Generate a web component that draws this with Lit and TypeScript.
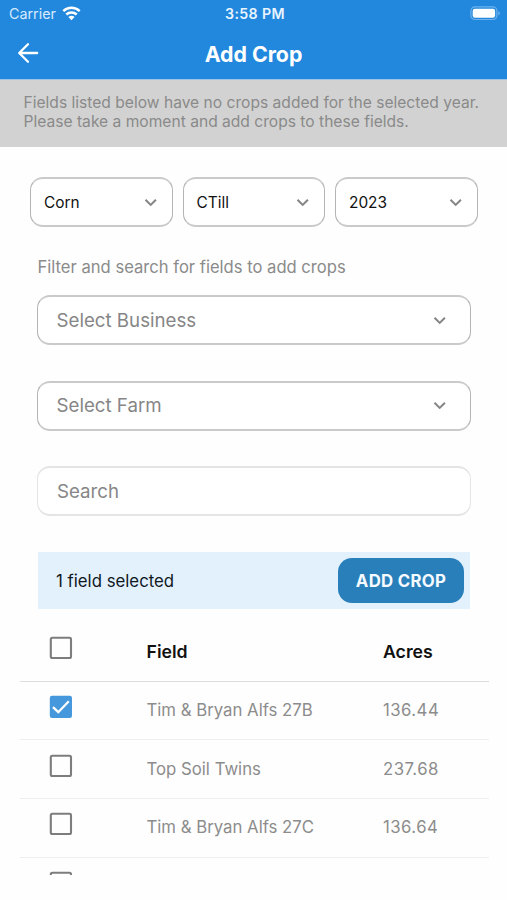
import { LitElement, html, css, svg } from "lit";
import { customElement, property } from "lit/decorators.js";

const chevron = html`<svg class="chev" width="14" height="9" viewBox="0 0 14 9" fill="none">
  ${svg`<path d="M1.5 1.7L6.7 6.9L11.9 1.7" stroke="currentColor" stroke-width="2"/>`}
</svg>`;

@customElement("select-box")
class SelectBox extends LitElement {
  @property() label = "";
  static styles = css`
    :host {
      display: flex;
      align-items: center;
      justify-content: space-between;
      box-sizing: border-box;
      height: 50px;
      border: 2px solid #cacaca;
      border-left-width: 1px;
      border-right-width: 1px;
      border-left-color: #b4b4b4;
      border-right-color: #b4b4b4;
      border-radius: 13px;
      background: #fff;
      color: #111;
      font-size: 15.4px;
      padding: 0 14px 0 13px;
    }
    :host([large]) {
      color: #868686;
      font-size: 18.7px;
      padding: 0 23px 0 18.5px;
    }
    .chev { color: #858585; display: block; }
  `;
  render() {
    return html`<span>${this.label}</span>${chevron}`;
  }
}

@customElement("check-box")
class CheckBox extends LitElement {
  @property({ type: Boolean }) checked = false;
  static styles = css`
    :host { display: block; width: 24px; height: 24px; }
    svg { display: block; }
  `;
  render() {
    return html`<svg width="24" height="24" viewBox="0 0 24 24" fill="none">
      ${this.checked
        ? svg`<rect x="0.8" y="0.8" width="22.2" height="22.2" rx="2.2" fill="#4698dc"/>
            <path d="M4 12.1L9.3 17.2L19.8 6.3" stroke="#fff" stroke-width="2.3"/>`
        : svg`<rect x="1.8" y="1.8" width="20.2" height="20.2" rx="1.5" stroke="#7d7d7d" stroke-width="2.1"/>`}
    </svg>`;
  }
}

interface Field {
  name: string;
  acres: string;
  checked: boolean;
}

@customElement("app-root")
class AppRoot extends LitElement {
  fields: Field[] = [
    { name: "Tim & Bryan Alfs 27B", acres: "136.44", checked: true },
    { name: "Top Soil Twins", acres: "237.68", checked: false },
    { name: "Tim & Bryan Alfs 27C", acres: "136.64", checked: false },
    { name: "", acres: "", checked: false },
  ];

  static styles = css`
    :host {
      display: flex;
      flex-direction: column;
      box-sizing: border-box;
      width: 507px;
      height: 900px;
      overflow: hidden;
      background: #fefefe;
      font-family: Inter, "Liberation Sans", sans-serif;
    }
    .head {
      height: 80px;
      box-sizing: border-box;
      border-bottom: 1px solid #9cc4e6;
      background: #2288dd;
      color: #fff;
      display: flex;
      flex-direction: column;
    }
    .status {
      height: 27px;
      display: grid;
      grid-template-columns: 1fr auto 1fr;
      align-items: center;
      padding: 0 6px 0 9px;
    }
    .carrier {
      display: flex;
      align-items: center;
      gap: 6px;
      font-size: 14.3px;
      color: #d6eaff;
    }
    .time { font-size: 14.2px; font-weight: 600; letter-spacing: 0.35px; color: #e8f4ff; }
    .battery { justify-self: end; }
    svg { display: block; }
    .bar {
      height: 52px;
      display: grid;
      grid-template-columns: 1fr auto 1fr;
      align-items: center;
      padding: 0 17px;
    }
    h1 { margin: 2px 0 0; font-size: 21.3px; font-weight: 700; line-height: 28px; }
    .notice {
      height: 67px;
      box-sizing: border-box;
      background: #d2d2d2;
      color: #8a8a8a;
      padding: 12.5px 23.5px 0;
      font-size: 15.6px;
      line-height: 19px;
    }
    .notice div { white-space: nowrap; }
    .trio {
      display: grid;
      grid-template-columns: repeat(3, 1fr);
      gap: 10px;
      padding: 30px 29.5px 0 30px;
    }
    .hint {
      margin: 30px 0 0 37.5px;
      height: 20px;
      line-height: 20px;
      font-size: 16.6px;
      color: #8b8b8b;
    }
    .filters {
      display: flex;
      flex-direction: column;
      gap: 35.5px;
      padding: 18px 36.5px 0 37px;
    }
    .search {
      box-sizing: border-box;
      height: 50px;
      border: 2px solid #e4e4e4;
      border-left-width: 1px;
      border-right-width: 1px;
      border-radius: 13px;
      background: #fff;
      color: #868686;
      font-size: 18.7px;
      padding-left: 19px;
      display: flex;
      align-items: center;
    }
    .banner {
      margin: 36px 37px 0 38px;
      height: 57px;
      flex: none;
      box-sizing: border-box;
      background: #e3f1fd;
      display: flex;
      align-items: center;
      justify-content: space-between;
      padding: 0 6px 0 18px;
      color: #10181f;
      font-size: 16.8px;
    }
    .btn {
      width: 126px;
      height: 45px;
      border: 0;
      border-radius: 14px;
      background: #297fb9;
      color: #f4faff;
      font: inherit;
      font-weight: 700;
      font-size: 16.8px;
      letter-spacing: 0.3px;
      padding: 0;
      white-space: nowrap;
    }
    .table {
      margin: 0 18px 0 19.5px;
      height: 266px;
      overflow: hidden;
    }
    .row {
      display: grid;
      grid-template-columns: 127px 236.5px 1fr;
      height: 58.7px;
      box-sizing: border-box;
      border-bottom: 1px solid #eeeeee;
      color: #8c8c8c;
      font-size: 16.75px;
      padding-top: 13.5px;
    }
    .row check-box { margin-left: 29px; }
    .row span { line-height: 20px; padding-top: 5px; }
    .row .acres { letter-spacing: 0.45px; }
    .row.top {
      height: 72.5px;
      border-bottom: 1.5px solid #dddddd;
      padding-top: 26.5px;
      color: #111;
      font-size: 17.7px;
      font-weight: 600;
    }
    .row.top span { padding-top: 6px; letter-spacing: 0; }
  `;

  render() {
    return html`
      <div class="head">
        <div class="status">
          <div class="carrier">
            <span>Carrier</span>
            <svg width="19" height="15" viewBox="0 0 19 15" fill="none">
              <path d="M1.3 5.1C5.9 .7 13.1 .7 17.7 5.1" stroke="#fff" stroke-width="2.5"/>
              <path d="M4.3 8.5C7.2 5.8 11.8 5.8 14.7 8.5" stroke="#fff" stroke-width="2.4"/>
              <path d="M6.4 11C8.2 9.4 10.8 9.4 12.6 11L9.5 14.2Z" fill="#fff"/>
            </svg>
          </div>
          <div class="time">3:58 PM</div>
          <svg class="battery" width="31" height="15" viewBox="0 0 31 15" fill="none">
            <rect x=".9" y=".9" width="26" height="12.6" rx="4" stroke="#6fb2ec" stroke-width="1.2"/>
            <rect x="2.7" y="2.7" width="22.4" height="9" rx="2.2" fill="#fff"/>
            <path d="M28.4 5.2C30.4 5.8 30.4 8.8 28.4 9.4Z" fill="#6fb2ec"/>
          </svg>
        </div>
        <div class="bar">
          <svg width="22" height="22" viewBox="0 0 22 22" fill="none">
            <path d="M20.2 11H2.6M11 2.2L2.2 11L11 19.8" stroke="#fff" stroke-width="2.3" stroke-linecap="round" stroke-linejoin="round"/>
          </svg>
          <h1>Add Crop</h1>
          <span></span>
        </div>
      </div>
      <div class="notice">
        <div>Fields listed below have no crops added for the selected year.</div>
        <div>Please take a moment and add crops to these fields.</div>
      </div>
      <div class="trio">
        <select-box label="Corn"></select-box>
        <select-box label="CTill"></select-box>
        <select-box label="2023"></select-box>
      </div>
      <div class="hint">Filter and search for fields to add crops</div>
      <div class="filters">
        <select-box large label="Select Business"></select-box>
        <select-box large label="Select Farm"></select-box>
        <div class="search">Search</div>
      </div>
      <div class="banner">
        <span>1 field selected</span>
        <button class="btn">ADD CROP</button>
      </div>
      <div class="table">
        <div class="row top">
          <check-box></check-box>
          <span>Field</span>
          <span>Acres</span>
        </div>
        ${this.fields.map(
          (f) => html`<div class="row">
            <check-box ?checked=${f.checked}></check-box>
            <span>${f.name}</span>
            <span class="acres">${f.acres}</span>
          </div>`
        )}
      </div>
    `;
  }
}
